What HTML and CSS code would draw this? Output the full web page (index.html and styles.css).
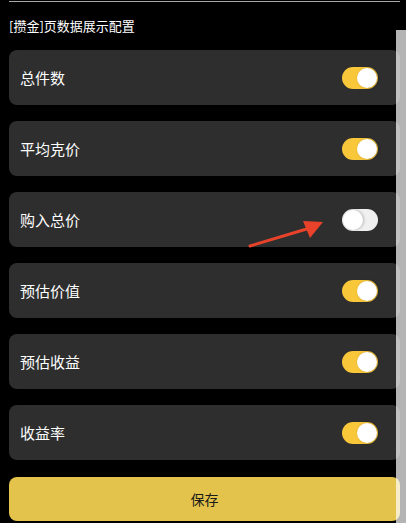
FILE: index.html
```html
<!DOCTYPE html>
<html lang="zh-CN">
<head>
  <meta charset="UTF-8" />
  <title>数据展示配置</title>
  <link rel="stylesheet" href="styles.css">
</head>
<body>
<div class="page">
  <div class="top-line"></div>
  <div class="title">[攒金]页数据展示配置</div>

  <div class="list">
    <div class="item"><span>总件数</span><div class="switch on"><i></i></div></div>
    <div class="item"><span>平均克价</span><div class="switch on"><i></i></div></div>
    <div class="item"><span>购入总价</span><div class="switch"><i></i></div></div>
    <div class="item"><span>预估价值</span><div class="switch on"><i></i></div></div>
    <div class="item"><span>预估收益</span><div class="switch on"><i></i></div></div>
    <div class="item"><span>收益率</span><div class="switch on"><i></i></div></div>
  </div>

  <div class="save-btn">保存</div>
</div>

<!-- 标注箭头 -->
<svg class="arrow" width="90" height="40" viewBox="0 0 90 40">
  <line x1="2" y1="34" x2="62" y2="16" stroke="#e8432a" stroke-width="3" stroke-linecap="round"/>
  <polygon points="75,10 55,9 62,26" fill="#e8432a"/>
</svg>

<div class="scrollbar"></div>
</body>
</html>
```

FILE: styles.css
```css
body {
  margin: 0;
  background: #000;
  font-family: "Noto Sans CJK SC", "Noto Sans", sans-serif;
  color: #fff;
}

.page {
  padding: 1px 6px 0 9px;
}

.top-line {
  height: 1px;
  background: #a8a8a8;
}

.title {
  font-size: 13px;
  line-height: 18px;
  padding: 15px 0 0;
  height: 33px;
}

.list {
  display: flex;
  flex-direction: column;
  gap: 16px;
}

/* 每一行 */
.item {
  height: 55px;
  background: #2e2e2e;
  border-radius: 8px;
  display: flex;
  align-items: center;
  justify-content: space-between;
  padding: 0 22px 0 11px;
  font-size: 15px;
}

/* 开关 */
.switch {
  width: 36px;
  height: 22px;
  border-radius: 11px;
  background: #f0f0f0;
  position: relative;
  margin-top: 1px;
}

.switch i {
  position: absolute;
  top: 1px;
  left: 1px;
  width: 20px;
  height: 20px;
  border-radius: 50%;
  background: #fff;
  box-shadow: 1px 0 3px rgba(0, 0, 0, 0.25);
}

.switch.on {
  background: #f8c73a;
}

.switch.on i {
  left: 15px;
}

.save-btn {
  margin-top: 17px;
  height: 44px;
  border-radius: 8px;
  background: #e3c34b;
  color: #1a1a1a;
  font-size: 14px;
  display: flex;
  align-items: center;
  justify-content: center;
}

.arrow {
  position: absolute;
  left: 248px;
  top: 212px;
}

.scrollbar {
  position: fixed;
  top: 30px;
  right: 0;
  bottom: 0;
  width: 10px;
  background: #b4b4b4;
  mix-blend-mode: screen;
}
```
